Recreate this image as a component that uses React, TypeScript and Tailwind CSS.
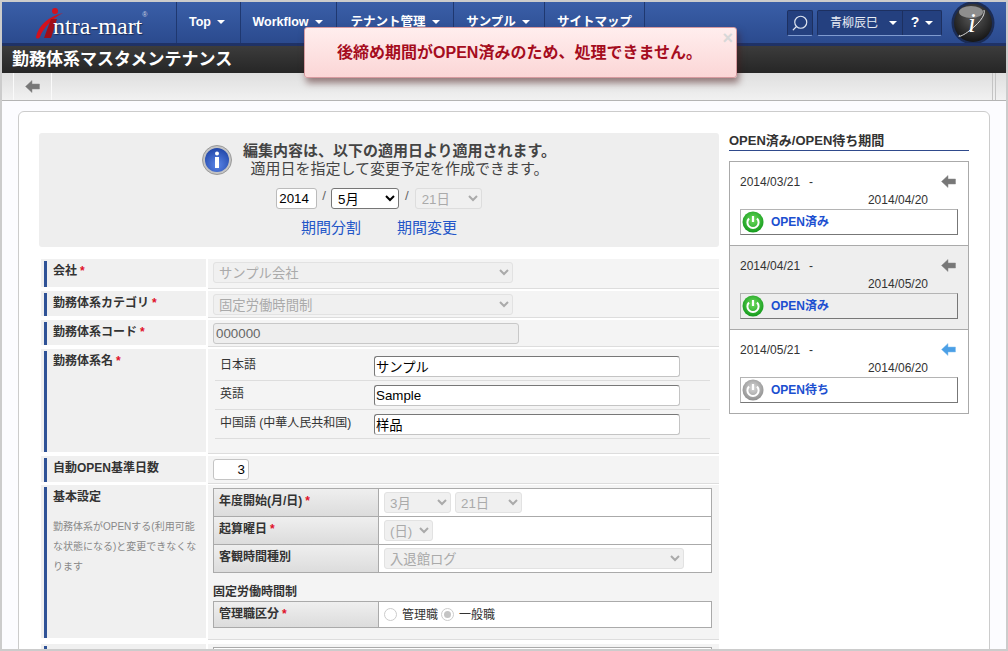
import { ReactNode } from 'react';
import { Search } from 'lucide-react';

const navItems = [
  { label: 'Top', width: 'w-[64px] pr-[3px]', caret: true },
  { label: 'Workflow', width: 'w-[96px] pr-[2px]', caret: true },
  { label: 'テナント管理', width: 'w-[117px]', caret: true },
  { label: 'サンプル', width: 'w-[91px] pr-[2px]', caret: true },
  { label: 'サイトマップ', width: 'w-[100px]', caret: false },
];

const periods = [
  { from: '2014/03/21', to: '2014/04/20', status: 'OPEN済み', on: true, active: false, bg: 'bg-white' },
  { from: '2014/04/21', to: '2014/05/20', status: 'OPEN済み', on: true, active: false, bg: 'bg-[#eeeeee]' },
  { from: '2014/05/21', to: '2014/06/20', status: 'OPEN待ち', on: false, active: true, bg: 'bg-white' },
];

const names = [
  { lang: '日本語', value: 'サンプル' },
  { lang: '英語', value: 'Sample' },
  { lang: '中国語 (中華人民共和国)', value: '样品' },
];

function Caret() {
  return <span className="ml-[6px] inline-block border-x-[4px] border-t-[4px] border-x-transparent border-t-white align-middle" />;
}

function Req() {
  return <span className="ml-[3px] text-[#e0102a]">*</span>;
}

function ArrowIcon({ blue }: { blue?: boolean }) {
  return (
    <svg width="15" height="13" viewBox="0 0 15 13">
      <path d="M0.5 6.5 L7 0.5 V4 H14.5 V9 H7 V12.5 Z" fill={blue ? '#4b9fe6' : '#777777'} stroke={blue ? '#86c0ef' : '#8a8a8a'} strokeWidth="0.5" />
    </svg>
  );
}

function PowerIcon({ on }: { on: boolean }) {
  const id = on ? 'pw-on' : 'pw-off';
  return (
    <svg width="22" height="22" viewBox="0 0 22 22" className="shrink-0">
      <defs>
        <radialGradient id={id} cx="50%" cy="40%" r="60%">
          <stop offset="0%" stopColor={on ? '#6fdc5e' : '#d8d8d8'} />
          <stop offset="100%" stopColor={on ? '#139a1c' : '#8f8f8f'} />
        </radialGradient>
      </defs>
      <circle cx="11" cy="11" r="10.5" fill={`url(#${id})`} />
      <path d="M7 7.5 A5.6 5.6 0 1 0 15 7.5" fill="none" stroke="#ffffff" strokeWidth="2" />
      <path d="M11 5 V11" stroke="#ffffff" strokeWidth="2.2" />
    </svg>
  );
}

function InfoIcon() {
  return (
    <svg width="30" height="30" viewBox="0 0 30 30" className="shrink-0">
      <defs>
        <radialGradient id="info-blue" cx="50%" cy="70%" r="70%">
          <stop offset="0%" stopColor="#5b86e8" />
          <stop offset="100%" stopColor="#2146a8" />
        </radialGradient>
      </defs>
      <circle cx="15" cy="15" r="14.5" fill="#c4c4c4" stroke="#9a9a9a" />
      <circle cx="15" cy="15" r="12" fill="url(#info-blue)" />
      <circle cx="15" cy="8.5" r="2" fill="#ffffff" />
      <rect x="13" y="12" width="4" height="11" fill="#ffffff" />
    </svg>
  );
}

function LogoBadge() {
  return (
    <svg width="44" height="44" viewBox="0 0 44 44" className="shrink-0">
      <defs>
        <radialGradient id="badge" cx="50%" cy="35%" r="65%">
          <stop offset="0%" stopColor="#5a5a5a" />
          <stop offset="100%" stopColor="#151515" />
        </radialGradient>
      </defs>
      <circle cx="22" cy="22" r="21.5" fill="#1b2c55" />
      <circle cx="22" cy="22" r="19" fill="url(#badge)" />
      <ellipse cx="20" cy="11" rx="12" ry="6" fill="#8e8e8e" />
      <path d="M9 34 C5 37 12 35 18 30 C26 24 35 15 33 9" fill="none" stroke="#dddddd" strokeWidth="1" />
      <text x="17" y="31" fill="#ffffff" fontSize="28" fontStyle="italic" fontFamily="'Liberation Serif', serif">i</text>
    </svg>
  );
}

function Brand() {
  return (
    <div className="relative flex h-full w-[174px] items-center pl-[51px]">
      <svg width="30" height="34" viewBox="0 0 30 34" className="absolute left-[33px] top-[6px]">
        <path d="M1 29 C3 18 14 8 28 5 C18 10 8 20 5 29 C4 31 1 31 1 29 Z" fill="#d3111c" />
        <circle cx="20" cy="3" r="3" fill="#d3111c" />
        <path d="M16 11 L22 11 L16 30 L9 30 Z" fill="#a00e18" />
      </svg>
      <span className="relative mt-[6px] font-['Liberation_Serif','Noto_Sans_CJK_JP',serif] text-[24px] leading-none text-white [text-shadow:1px_1px_1px_#1a2b55]">
        ntra-mart
      </span>
      <span className="relative -mt-[14px] text-[7px] text-[#ccd3e2]">®</span>
    </div>
  );
}

function Header() {
  return (
    <div className="flex h-[44px] shrink-0 items-stretch overflow-hidden border-b-[3px] border-[#1f3266] bg-gradient-to-b from-[#3a5fa8] to-[#2b4a8e]">
      <Brand />
      {navItems.map((item) => (
        <div
          key={item.label}
          className={`flex items-center justify-center border-l border-[#1f3870] pb-[1px] text-[12.5px] font-bold whitespace-nowrap text-white ${item.width}`}
        >
          {item.label}
          {item.caret && <Caret />}
        </div>
      ))}
      <div className="border-l border-[#1f3870]" />
      <div className="ml-auto flex items-center gap-[4px] pr-[11px]">
        <div className="flex h-[26px] w-[26px] items-center justify-center rounded-[2px] border border-[#1d3060] border-b-[#7f9bd0] bg-[#24407f]">
          <Search size={18} strokeWidth={1.6} className="-scale-x-100 text-[#dde4f0]" />
        </div>
        <div className="flex h-[26px] items-center rounded-[2px] border border-[#1d3060] border-b-[#7f9bd0] bg-[#24407f] text-white">
          <div className="flex h-full w-[85px] items-center whitespace-nowrap border-r border-[#1d3060] pl-[12px] text-[12px] text-[#e8ecf4]">
            青柳辰巳
            <span className="ml-[5px]"><Caret /></span>
          </div>
          <div className="flex h-full w-[38px] items-center justify-center text-[14px] font-bold">
            ?
            <Caret />
          </div>
        </div>
        <div className="ml-[5px]">
          <LogoBadge />
        </div>
      </div>
    </div>
  );
}

function TitleBar() {
  return (
    <div className="flex h-[27px] shrink-0 items-center bg-gradient-to-b from-[#3c3c3c] to-[#262626] pl-[10px] text-[17px] font-bold text-white">
      勤務体系マスタメンテナンス
    </div>
  );
}

function Toolbar() {
  return (
    <div className="flex h-[28px] shrink-0 border-b border-[#b4b4b4] bg-gradient-to-b from-[#dfdfdf] to-[#f1f1f1] pl-[11px] pr-[10px]">
      <div className="flex w-[39px] items-center justify-center border-x border-[#fafafa]">
        <ArrowIcon />
      </div>
      <div className="ml-auto w-[4px] border-x border-[#c4c4c4]" />
    </div>
  );
}

function Toast() {
  return (
    <div className="absolute left-[302px] top-[25px] flex h-[51px] w-[433px] items-center justify-center rounded-[3px] border border-[#d79a9f] bg-gradient-to-b from-[#ffeeee] to-[#fbd6d6] pr-[2px] text-[16px] font-bold text-[#a50d1e] shadow-[2px_5px_7px_rgba(70,20,20,0.5)]">
      後締め期間がOPEN済みのため、処理できません。
      <span className="absolute right-[3px] top-[1px] text-[18px] leading-[18px] font-bold text-[#d8d8d8]">×</span>
    </div>
  );
}

function Notice() {
  return (
    <div className="rounded-[3px] bg-[#eeeeee] pt-[9px] text-[#444444]">
      <div className="flex items-center justify-center">
        <InfoIcon />
        <div className="ml-[11px] text-center text-[15px] leading-[18px]">
          <div className="font-bold">編集内容は、以下の適用日より適用されます。</div>
          <div>適用日を指定して変更予定を作成できます。</div>
        </div>
      </div>
      <div className="mt-[10px] flex items-center justify-center text-[13.33px] text-black">
        <input readOnly value="2014" className="h-[21px] w-[41px] rounded-[3px] border border-[#bbbbbb] bg-white px-[2px]" />
        <span className="mx-[5px] -mt-[5px] text-[#666666]">/</span>
        <select defaultValue="5月" className="h-[21px] w-[68px] rounded-[3px] border border-[#767676] bg-white pl-[2px] pt-[1px]">
          <option>5月</option>
        </select>
        <span className="mx-[6px] -mt-[5px] text-[#666666]">/</span>
        <select disabled className="h-[21px] w-[67px] rounded-[3px] border border-[#dddddd] bg-[#f0f0f0] pl-[2px] pt-[1px] text-[#aaaaaa]">
          <option>21日</option>
        </select>
      </div>
      <div className="mt-[9px] flex justify-center gap-[36px] pb-[9px] text-[15px] leading-[20px] text-[#2356c8]">
        <span>期間分割</span>
        <span>期間変更</span>
      </div>
    </div>
  );
}

function DisabledSelect({ value, width }: { value: string; width: string }) {
  return (
    <select disabled className={`h-[21px] rounded-[3px] border border-[#e2e2e2] bg-[#f0f0f0] pl-[1px] pt-[2px] text-[13.33px] text-[#aaaaaa] ${width}`}>
      <option>{value}</option>
    </select>
  );
}

function Row({ label, height, gap, children, note }: { label: ReactNode; height: string; gap: string; children: ReactNode; note?: ReactNode }) {
  return (
    <div className={`flex gap-[2px] ${height} ${gap}`}>
      <div className="mb-[2px] w-[165px] shrink-0 bg-[#f0f0f0] pl-[3px] pt-[2px]">
        <div className="h-full border-l-[3px] border-[#2f5296] pl-[6px] pt-[1px] text-[12px] font-bold leading-[18px] text-[#333333]">
          {label}
          {note}
        </div>
      </div>
      <div className="flex-1 border-b border-[#dddddd] bg-[#f4f4f4] pl-[5px]">{children}</div>
    </div>
  );
}

function SubRow({ label, height = 'h-[28px]', last, children }: { label: ReactNode; height?: string; last?: boolean; children: ReactNode }) {
  return (
    <div className={`flex ${height} ${last ? '' : 'border-b border-[#aaaaaa]'}`}>
      <div className="w-[165px] shrink-0 border-r border-[#aaaaaa] bg-gradient-to-b from-[#efefef] to-[#dcdcdc] pl-[5px] pt-[3px] text-[12px] font-bold leading-[18px] text-[#333333]">
        {label}
      </div>
      <div className="flex flex-1 items-center gap-[4px] bg-white pl-[5px]">{children}</div>
    </div>
  );
}

function FormTable() {
  return (
    <div className="mt-[12px] ml-[2px]">
      <Row label={<>会社<Req /></>} height="h-[30px]" gap="mb-[2px]">
        <div className="flex pt-[3px]"><DisabledSelect value="サンプル会社" width="w-[300px]" /></div>
      </Row>
      <Row label={<>勤務体系カテゴリ<Req /></>} height="h-[27px]" gap="mb-[2px]">
        <div className="flex pt-[3px]"><DisabledSelect value="固定労働時間制" width="w-[300px]" /></div>
      </Row>
      <Row label={<>勤務体系コード<Req /></>} height="h-[27px]" gap="mb-[2px]">
        <div className="flex pt-[3px]">
          <input readOnly value="000000" className="h-[21px] w-[306px] rounded-[3px] border border-[#c8c8c8] bg-[#eeeeee] px-[2px] pb-[1px] text-[13.33px] text-[#666666]" />
        </div>
      </Row>
      <Row label={<>勤務体系名<Req /></>} height="h-[105px]" gap="mb-[2px]">
        <div className="w-[497px] pl-[2px] pt-[3px]">
          {names.map((n) => (
            <div key={n.lang} className="flex h-[29px] items-center border-b border-[#dddddd] pl-[5px] text-[12px] text-[#333333]">
              <span className="w-[154px] -mt-[3px]">{n.lang}</span>
              <input readOnly value={n.value} className="h-[21px] w-[306px] rounded-[3px] border border-[#c4c4c4] border-t-[#777777] border-l-[#777777] bg-white px-[1px] text-[13.33px] text-black" />
            </div>
          ))}
        </div>
      </Row>
      <Row label="自動OPEN基準日数" height="h-[28px]" gap="mb-[1px]">
        <div className="flex pt-[3px]">
          <input readOnly value="3" className="h-[21px] w-[36px] rounded-[3px] border border-[#c4c4c4] bg-white px-[3px] text-right text-[13.33px] text-black" />
        </div>
      </Row>
      <Row
        label="基本設定"
        height="h-[155px]"
        gap="mb-[4px]"
        note={<p className="mt-[11px] w-[145px] text-[10px] leading-[20px] font-normal text-[#888888]">勤務体系がOPENする(利用可能な状態になる)と変更できなくなります</p>}
      >
        <div className="w-[499px] pt-[3px]">
          <div className="border border-[#aaaaaa]">
            <SubRow label={<>年度開始(月/日)<Req /></>}>
              <DisabledSelect value="3月" width="w-[67px]" />
              <DisabledSelect value="21日" width="w-[67px]" />
            </SubRow>
            <SubRow label={<>起算曜日<Req /></>}>
              <DisabledSelect value="(日)" width="w-[49px]" />
            </SubRow>
            <SubRow label="客観時間種別" height="h-[27px]" last>
              <DisabledSelect value="入退館ログ" width="w-[300px]" />
            </SubRow>
          </div>
          <div className="mt-[10px] text-[12px] font-bold leading-[18px] text-[#333333]">固定労働時間制</div>
          <div className="border border-[#aaaaaa]">
            <SubRow label={<>管理職区分<Req /></>} height="h-[25px]" last>
              <span className="h-[13px] w-[13px] rounded-full border border-[#cccccc] bg-white" />
              <span className="ml-[1px] text-[12px] text-[#333333]">管理職</span>
              <span className="-ml-[1px] flex h-[13px] w-[13px] items-center justify-center rounded-full border border-[#cccccc] bg-white">
                <span className="h-[7px] w-[7px] rounded-full bg-[#c4c4c4]" />
              </span>
              <span className="ml-[1px] text-[12px] text-[#333333]">一般職</span>
            </SubRow>
          </div>
        </div>
      </Row>
      <Row label="" height="h-[20px]" gap="">
        <div className="h-full w-[499px] pt-[3px]">
          <div className="h-full border border-[#aaaaaa] bg-white" />
        </div>
      </Row>
    </div>
  );
}

function PeriodList() {
  return (
    <div className="w-[240px] shrink-0">
      <div className="border-b border-[#2f4a8c] pb-[1px] text-[13px] font-bold leading-[16px] text-[#333333]">
        OPEN済み/OPEN待ち期間
      </div>
      <div className="mt-[10px] border border-[#aaaaaa]">
        {periods.map((p, i) => (
          <div key={p.from} className={`px-[10px] pt-[12px] text-[12px] text-[#333333] ${p.bg} ${i > 0 ? 'h-[84px] border-t border-[#aaaaaa]' : 'h-[83px]'}`}>
            <div className="flex h-[14px] items-center justify-between pr-[2px] leading-[14px]">
              <span className="mt-[2px]">
                {p.from}
                <span className="ml-[9px]">-</span>
              </span>
              <ArrowIcon blue={p.active} />
            </div>
            <div className="mt-[5px] pr-[30px] text-right leading-[14px]">{p.to}</div>
            <div className="mt-[2px] flex h-[26px] items-center gap-[7px] border border-[#b4b4b4] border-r-[#777777] border-b-[#777777] pl-[1px] font-bold text-[#1c4fd0]">
              <PowerIcon on={p.on} />
              {p.status}
            </div>
          </div>
        ))}
      </div>
    </div>
  );
}

export default function App() {
  return (
    <div className="relative flex h-[651px] w-[1008px] flex-col overflow-hidden border-2 border-[#cccccc] bg-[#fcfcff] font-['Liberation_Sans','Noto_Sans_CJK_JP',sans-serif]">
      <Header />
      <TitleBar />
      <Toolbar />
      <div className="min-h-0 flex-1 px-[16px] pt-[10px]">
        <div className="flex h-[600px] gap-[10px] rounded-[6px] border border-[#cccccc] bg-white pl-[20px] pr-[20px] pt-[21px]">
          <div className="w-[680px] shrink-0">
            <Notice />
            <FormTable />
          </div>
          <PeriodList />
        </div>
      </div>
      <Toast />
    </div>
  );
}
